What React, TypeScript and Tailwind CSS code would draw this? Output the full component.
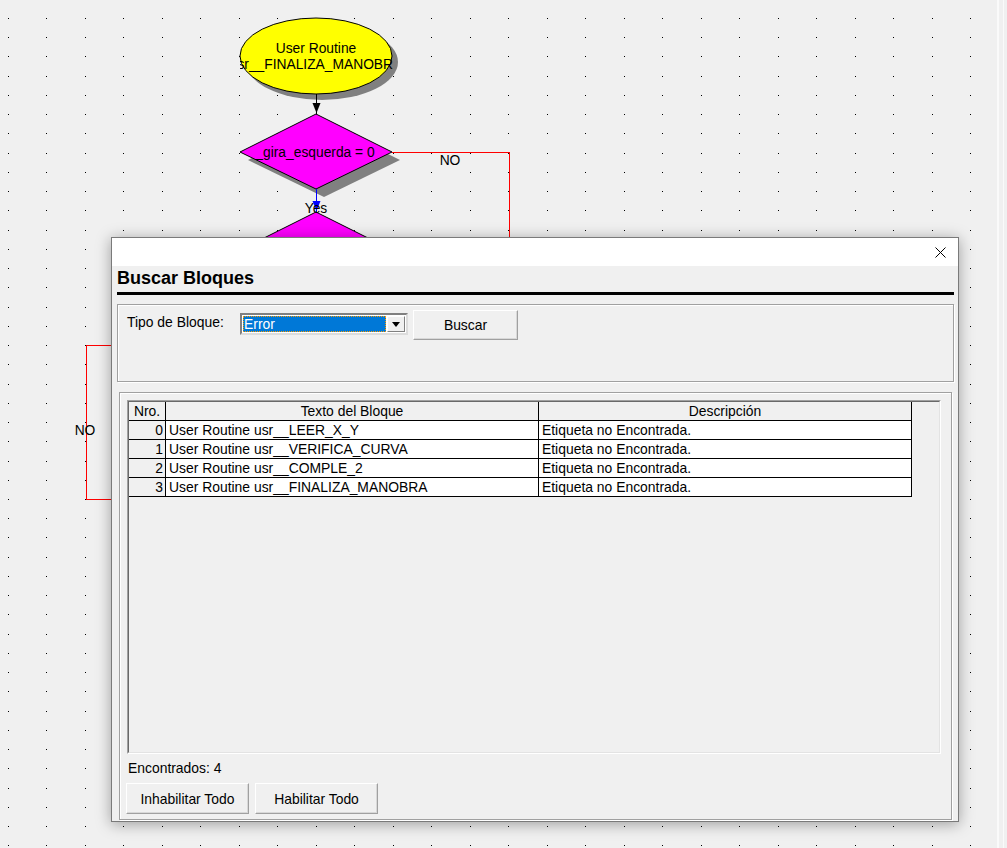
import React from "react";

const rows = [
  { nro: 0, texto: "User Routine usr__LEER_X_Y", desc: "Etiqueta no Encontrada." },
  { nro: 1, texto: "User Routine usr__VERIFICA_CURVA", desc: "Etiqueta no Encontrada." },
  { nro: 2, texto: "User Routine usr__COMPLE_2", desc: "Etiqueta no Encontrada." },
  { nro: 3, texto: "User Routine usr__FINALIZA_MANOBRA", desc: "Etiqueta no Encontrada." },
];

// grid of canvas dots, snapped to whole pixels
const dotXs = Array.from({ length: 26 }, (_, i) => Math.round(8 + 38.48 * i));
const dotYs = Array.from({ length: 44 }, (_, j) => Math.round(18 + 19.24 * j));

function FlowCanvas() {
  return (
    <svg width={1007} height={848} className="absolute left-0 top-0" shapeRendering="crispEdges">
      {dotYs.map((y) =>
        dotXs.map((x) => <rect key={`${x}-${y}`} x={x} y={y} width={1} height={1} fill="#000" />)
      )}

      {/* user routine ellipse */}
      <g shapeRendering="auto">
        <ellipse cx={322} cy={62} rx={76} ry={38} fill="#808080" />
        <ellipse cx={316} cy={56} rx={76} ry={38} fill="#ffff00" stroke="#000" strokeWidth={1} />
      </g>
      <clipPath id="ellClip">
        <rect x={240} y={18} width={153} height={76} />
      </clipPath>
      <g clipPath="url(#ellClip)" fontFamily="'Liberation Sans', Arial, sans-serif" fontSize="13.8" fill="#000" textAnchor="middle">
        <text x={316} y={53}>User Routine</text>
        <text x={316} y={69}>usr__FINALIZA_MANOBRA</text>
      </g>

      {/* arrow ellipse -> diamond */}
      <line x1={316.5} y1={94} x2={316.5} y2={114} stroke="#000" />
      <polygon points="312.5,103 320.5,103 316.5,113" fill="#000" shapeRendering="auto" />

      {/* decision diamond 1 */}
      <g shapeRendering="auto">
        <polygon points="324,122 400,160 324,197 248,160" fill="#808080" />
        <polygon points="316,114 392,152 316,189 240,152" fill="#ff00ff" stroke="#000" strokeWidth={1} />
      </g>
      <text x={315} y={157} fontFamily="'Liberation Sans', Arial, sans-serif" fontSize="13.8" textAnchor="middle" fill="#000">
        _gira_esquerda = 0
      </text>

      {/* NO branch to the right */}
      <polyline points="392,152.5 509.5,152.5 509.5,240" fill="none" stroke="#ff0000" />
      <text x={450} y={165} fontFamily="'Liberation Sans', Arial, sans-serif" fontSize="13.8" textAnchor="middle" fill="#000">
        NO
      </text>

      {/* yes branch */}
      <line x1={316.5} y1={189} x2={316.5} y2={212} stroke="#0000ff" />
      <polygon points="312.5,201 320.5,201 316.5,211" fill="#0000ff" shapeRendering="auto" />

      {/* decision diamond 2 (mostly hidden) */}
      <g shapeRendering="auto">
        <polygon points="324,220 400,258 324,295 248,258" fill="#808080" />
        <polygon points="316,212 392,250 316,287 240,250" fill="#ff00ff" stroke="#000" strokeWidth={1} />
      </g>
      <text x={316} y={213} fontFamily="'Liberation Sans', Arial, sans-serif" fontSize="13.8" textAnchor="middle" fill="#000">
        Yes
      </text>

      {/* left loop */}
      <polyline points="120,345.5 86.5,345.5 86.5,499.5 120,499.5" fill="none" stroke="#ff0000" />
      <text x={85} y={435} fontFamily="'Liberation Sans', Arial, sans-serif" fontSize="13.8" textAnchor="middle" fill="#000">
        NO
      </text>
    </svg>
  );
}

function RaisedButton({ label, className }: { label: string; className: string }) {
  return (
    <button
      className={`flex items-center justify-center bg-[#f0f0f0] border border-t-white border-l-white border-r-[#a0a0a0] border-b-[#a0a0a0] shadow-[inset_-1px_-1px_0_#d8d8d8] text-[13.9px] leading-[16px] text-black ${className}`}
    >
      {label}
    </button>
  );
}

function ResultsGrid() {
  return (
    <div className="w-[814px] h-[354px] border border-t-[#a0a0a0] border-l-[#a0a0a0] border-r-white border-b-white">
      <div className="h-full border border-t-[#696969] border-l-[#696969] border-r-[#e3e3e3] border-b-[#e3e3e3] bg-[#f0f0f0]">
        <div className="flex">
          <div className="w-[37px] h-[19px] border-r border-b border-black flex items-center justify-center">Nro.</div>
          <div className="w-[373px] h-[19px] border-r border-b border-black flex items-center justify-center">Texto del Bloque</div>
          <div className="w-[373px] h-[19px] border-r border-b border-black flex items-center justify-center">Descripción</div>
        </div>
        {rows.map((r) => (
          <div key={r.nro} className="flex">
            <div className="w-[37px] h-[19px] border-r border-b border-black flex items-center justify-end pr-[2px]">{r.nro}</div>
            <div className="w-[373px] h-[19px] border-r border-b border-black bg-white flex items-center pl-[3px]">{r.texto}</div>
            <div className="w-[373px] h-[19px] border-r border-b border-black bg-white flex items-center pl-[3px]">{r.desc}</div>
          </div>
        ))}
      </div>
    </div>
  );
}

export default function App() {
  return (
    <div className="relative w-[1007px] h-[848px] overflow-hidden bg-[#f0f0f0] font-['Liberation_Sans',Arial,sans-serif] text-black">
      <FlowCanvas />

      {/* right edge of the canvas area */}
      <div className="absolute right-0 top-0 h-full w-[10px] border-l-2 border-l-[#fafafa] flex">
        <div className="w-[4px]" />
        <div className="w-[1px] h-full bg-[#fafafa]" />
      </div>

      {/* Buscar Bloques dialog */}
      <div className="absolute left-[111px] top-[237px] w-[848px] h-[585px] border border-[#7a7a7a] bg-[#f0f0f0] shadow-[0_2px_14px_rgba(0,0,0,0.35)] flex flex-col text-[13.9px] leading-[16px]">
        <div className="h-[28px] bg-white flex items-center justify-end pr-[12px]">
          <svg width="11" height="11" viewBox="0 0 11 11">
            <path d="M0.5 0.5 L10.5 10.5 M10.5 0.5 L0.5 10.5" stroke="#000" strokeWidth="1" fill="none" />
          </svg>
        </div>

        <div className="flex-1 flex flex-col pl-[5px] pr-[4px] pb-[1px]">
          <div className="h-[26px] pt-[2px] text-[18px] leading-[20px] font-bold">Buscar Bloques</div>
          <div className="h-[3px] bg-black" />

          {/* search group */}
          <div className="mt-[9px] h-[78px] border border-[#a0a0a0] shadow-[inset_1px_1px_0_white,1px_1px_0_white] flex items-start pl-[9px]">
            <div className="w-[113px] mt-[9px]">Tipo de Bloque:</div>
            <div className="mt-[8px] w-[168px] h-[22px] border-2 border-t-[#808080] border-l-[#808080] border-r-[#dcdcdc] border-b-[#dcdcdc] bg-white flex items-stretch p-[1px]">
              <div className="flex-1 bg-[#0078d7] text-white flex items-center pl-[1px] outline-1 outline-dotted outline-[#ff9c00] -outline-offset-1">
                Error
              </div>
              <div className="w-[18px] ml-[1px] bg-[#f0f0f0] border border-t-white border-l-white border-r-[#808080] border-b-[#808080] flex items-center justify-center">
                <svg width="8" height="5" viewBox="0 0 8 5">
                  <polygon points="0,0 8,0 4,5" fill="#000" />
                </svg>
              </div>
            </div>
            <RaisedButton label="Buscar" className="mt-[5px] ml-[5px] w-[105px] h-[30px]" />
          </div>

          {/* results group */}
          <div className="mt-[10px] ml-[2px] mr-[2px] flex-1 border border-[#a0a0a0] shadow-[inset_1px_1px_0_white,1px_1px_0_white] flex flex-col pl-[7px] pt-[7px]">
            <ResultsGrid />
            <div className="mt-[6px] pl-[1px] h-[16px]">Encontrados: 4</div>
            <div className="mt-[7px] flex gap-[6px] -ml-[1px]">
              <RaisedButton label="Inhabilitar Todo" className="w-[123px] h-[31px]" />
              <RaisedButton label="Habilitar Todo" className="w-[123px] h-[31px]" />
            </div>
          </div>
        </div>
      </div>
    </div>
  );
}
